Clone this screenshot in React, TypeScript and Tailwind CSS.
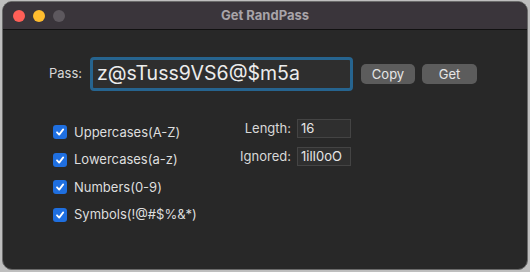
import React, { useState } from 'react';

const font = { fontFamily: 'Inter, "Noto Sans", sans-serif' };

function Check({ label, checked, onToggle }: { label: string; checked: boolean; onToggle: () => void }) {
  return (
    <label className="flex items-center gap-[7px] h-[14px] cursor-default" onClick={onToggle}>
      <span
        className={`w-[14px] h-[14px] rounded-[3px] flex items-center justify-center ${
          checked ? 'bg-[#1f6fe0]' : 'bg-[#3c3c3c] border border-[#555]'
        }`}
      >
        {checked && (
          <svg width="10" height="10" viewBox="0 0 10 10">
            <path d="M2 5.3 L4.2 7.6 L8.2 2.4" fill="none" stroke="white" strokeWidth="1.8" strokeLinecap="round" strokeLinejoin="round" />
          </svg>
        )}
      </span>
      <span className="text-[13px] text-[#dedede] leading-none">{label}</span>
    </label>
  );
}

export default function App() {
  const [opts, setOpts] = useState({ upper: true, lower: true, num: true, sym: true });
  const toggle = (k: keyof typeof opts) => setOpts({ ...opts, [k]: !opts[k] });

  return (
    <div className="w-[530px] h-[272px] bg-[#bebebe] p-[1px_2px_2px_2px]" style={font}>
      <div className="w-full h-full rounded-[10px] border border-[#6a6a6a] overflow-hidden flex flex-col bg-[#282828]">
        {/* Title bar */}
        <div className="h-[28px] bg-[#3a353b] border-b border-[#111] flex items-center relative">
          <div className="flex gap-[8px] pl-[10px]">
            <span className="w-[12px] h-[12px] rounded-full bg-[#fe5f57]" />
            <span className="w-[12px] h-[12px] rounded-full bg-[#febc2e]" />
            <span className="w-[12px] h-[12px] rounded-full bg-[#5d585e]" />
          </div>
          <div className="absolute inset-0 flex items-center justify-center text-[13px] font-bold text-[#a8a4a9]">
            Get RandPass
          </div>
        </div>

        {/* Body */}
        <div className="flex-1 pl-[46px] pt-[27px]">
          <div className="flex items-center">
            <span className="text-[13px] text-[#d8d8d8] w-[41px]">Pass:</span>
            <div className="w-[263px] h-[34px] rounded-[4px] border-[3px] border-[#26648f] bg-[#2e2e2e] flex items-center pl-[4px]">
              <span className="text-[19.5px] text-[#ececec] leading-none">z@sTuss9VS6@$m5a</span>
            </div>
            <button className="ml-[8px] w-[54px] h-[20px] rounded-[5px] bg-[#5c5c5c] text-[13px] text-[#e6e6e6] leading-none">
              Copy
            </button>
            <button className="ml-[7px] w-[55px] h-[20px] rounded-[5px] bg-[#5c5c5c] text-[13px] text-[#e6e6e6] leading-none">
              Get
            </button>
          </div>

          <div className="flex mt-[34px]">
            <div className="flex flex-col gap-[13.5px] pl-[4px] w-[180px]">
              <Check label="Uppercases(A-Z)" checked={opts.upper} onToggle={() => toggle('upper')} />
              <Check label="Lowercases(a-z)" checked={opts.lower} onToggle={() => toggle('lower')} />
              <Check label="Numbers(0-9)" checked={opts.num} onToggle={() => toggle('num')} />
              <Check label="Symbols(!@#$%&*)" checked={opts.sym} onToggle={() => toggle('sym')} />
            </div>
            <div className="flex flex-col gap-[8px] -mt-[6px]">
              <div className="flex items-center">
                <span className="w-[62px] text-right text-[13px] text-[#d8d8d8]">Length:</span>
                <div className="ml-[6px] w-[54px] h-[19px] bg-[#2f2f2f] border border-[#444] flex items-center pl-[3px] text-[13px] text-[#e6e6e6]">
                  16
                </div>
              </div>
              <div className="flex items-center">
                <span className="w-[62px] text-right text-[13px] text-[#d8d8d8]">Ignored:</span>
                <div className="ml-[6px] w-[54px] h-[19px] bg-[#2f2f2f] border border-[#444] flex items-center pl-[3px] text-[13px] text-[#e6e6e6]">
                  1ilI0oO
                </div>
              </div>
            </div>
          </div>
        </div>
      </div>
    </div>
  );
}
